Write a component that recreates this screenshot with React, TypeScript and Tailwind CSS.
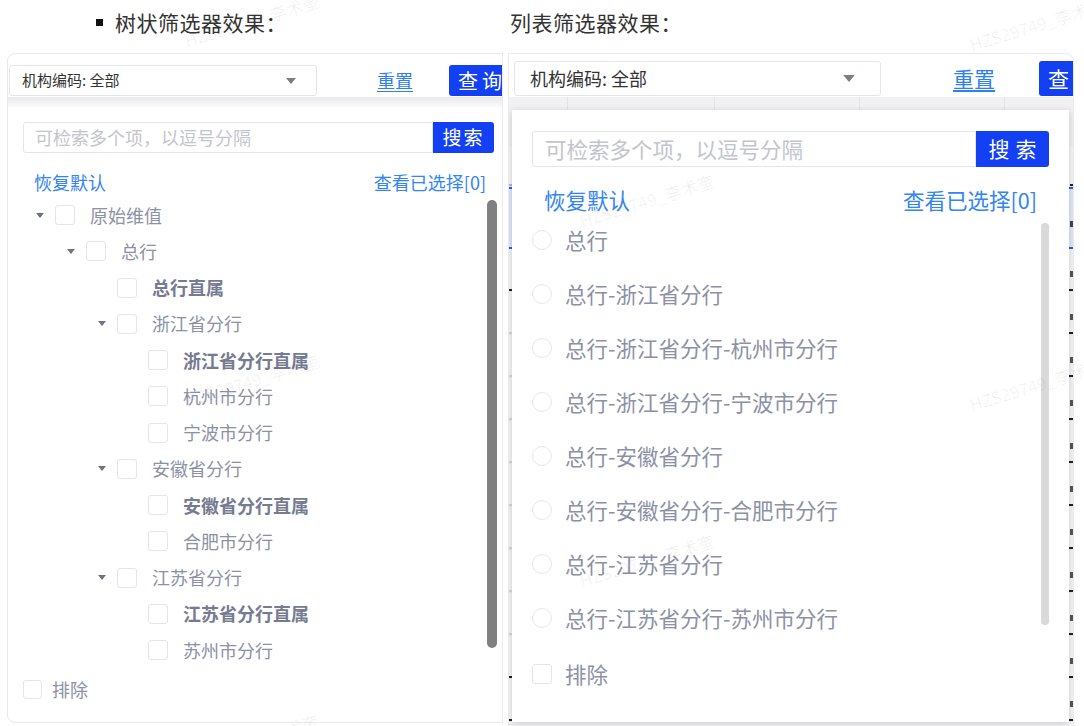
import React from "react";

type TreeNode = { label: string; level: number; caret?: boolean; bold?: boolean };

const treeNodes: TreeNode[] = [
  { label: "原始维值", level: 0, caret: true },
  { label: "总行", level: 1, caret: true },
  { label: "总行直属", level: 2, bold: true },
  { label: "浙江省分行", level: 2, caret: true },
  { label: "浙江省分行直属", level: 3, bold: true },
  { label: "杭州市分行", level: 3 },
  { label: "宁波市分行", level: 3 },
  { label: "安徽省分行", level: 2, caret: true },
  { label: "安徽省分行直属", level: 3, bold: true },
  { label: "合肥市分行", level: 3 },
  { label: "江苏省分行", level: 2, caret: true },
  { label: "江苏省分行直属", level: 3, bold: true },
  { label: "苏州市分行", level: 3 },
];

// indent per tree level (31px steps)
const indent = ["pl-[28px]", "pl-[59px]", "pl-[90px]", "pl-[121px]"];

const listItems = [
  "总行",
  "总行-浙江省分行",
  "总行-浙江省分行-杭州市分行",
  "总行-浙江省分行-宁波市分行",
  "总行-安徽省分行",
  "总行-安徽省分行-合肥市分行",
  "总行-江苏省分行",
  "总行-江苏省分行-苏州市分行",
];

// faint tiled watermark over the whole page
const watermarks = [
  "left-[185px] top-[28px]",
  "left-[580px] top-[208px]",
  "left-[970px] top-[392px]",
  "left-[970px] top-[32px]",
  "left-[185px] top-[388px]",
  "left-[580px] top-[568px]",
  "left-[-205px] top-[212px]",
  "left-[-205px] top-[572px]",
  "left-[185px] top-[748px]",
  "left-[580px] top-[-152px]",
];

function Caret({ className }: { className: string }) {
  return (
    <svg viewBox="0 0 10 6" className={className}>
      <path d="M0 0h10L5 6z" fill="currentColor" />
    </svg>
  );
}

function TreePanel() {
  return (
    <div className="flex h-[670px] w-[496px] shrink-0 flex-col overflow-hidden rounded-l-[8px] border border-[#e9e9ee] bg-white">
      {/* filter header */}
      <div className="flex items-start whitespace-nowrap pt-[11px] pb-[1px]">
        <div className="ml-[1px] flex h-[31px] w-[308px] shrink-0 items-center justify-between rounded-[3px] border border-[#e4e5ec] pl-[12px] pr-[20px] text-[15px] text-[#333]">
          <span>机构编码: 全部</span>
          <Caret className="h-[6px] w-[10px] text-[#7b7f8c]" />
        </div>
        <span className="ml-[60px] mt-[3px] shrink-0 text-[18px] leading-[24px] text-[#2f7ff2] underline underline-offset-[3px]">重置</span>
        <div className="ml-[36px] flex h-[31px] w-[60px] shrink-0 items-center rounded-l-[3px] bg-[#1240f2] pl-[9px] text-[20px] tracking-[4px] text-white">
          查询
        </div>
      </div>
      <div className="h-[10px] bg-linear-to-b from-[#e9e9ee] to-[#fbfbfc]" />

      {/* search */}
      <div className="ml-[15px] mt-[15px] flex whitespace-nowrap">
        <div className="flex h-[31px] w-[410px] shrink-0 items-center rounded-l-[3px] border border-[#e4e5ec] pl-[11px] text-[18px] text-[#c3c5cd]">
          可检索多个项，以逗号分隔
        </div>
        <div className="flex h-[31px] w-[61px] shrink-0 items-center justify-center rounded-r-[3px] bg-[#1240f2] text-[19px] tracking-[2px] text-white">
          搜索
        </div>
      </div>

      <div className="ml-[26px] mr-[16px] mt-[17px] flex h-[24px] items-center justify-between whitespace-nowrap text-[18px] text-[#3384f4]">
        <span>恢复默认</span>
        <span>查看已选择[0]</span>
      </div>

      {/* tree */}
      <div className="mt-[3px] flex">
        <div className="flex flex-1 flex-col">
          {treeNodes.map((node) => (
            <div key={node.label} className={`flex h-[36.25px] items-center whitespace-nowrap ${indent[node.level]}`}>
              <div className="flex w-[8px] shrink-0 justify-center">
                {node.caret && <Caret className="h-[5px] w-[8px] text-[#6e7286]" />}
              </div>
              <div className="ml-[11px] h-[20px] w-[20px] shrink-0 rounded-[3px] border border-[#e3e4ec] bg-white" />
              <span
                className={`ml-[15px] text-[18px] ${node.bold ? "font-bold text-[#767b92]" : "text-[#8c91a6]"}`}
              >
                {node.label}
              </span>
            </div>
          ))}
        </div>
        <div className="mr-[5px] mt-[3px] h-[448px] w-[10px] shrink-0 rounded-full bg-[#808080]" />
      </div>

      <div className="ml-[15px] mt-[9px] flex h-[24px] items-center">
        <div className="h-[19px] w-[19px] shrink-0 rounded-[3px] border border-[#e3e4ec]" />
        <span className="ml-[10px] text-[18px] text-[#8c91a6]">排除</span>
      </div>
    </div>
  );
}

function BackgroundTable() {
  const rows = Array.from({ length: 12 }, (_, i) => i);
  return (
    <div className="flex flex-col">
      <div className="flex h-[50px] bg-[#f1f1f4]">
        <div className="w-[59px] border-r border-[#e2e2e8]" />
        <div className="w-[147px] border-r border-[#e2e2e8]" />
        <div className="w-[145px] border-r border-[#e2e2e8]" />
        <div className="w-[145px] border-r border-[#e2e2e8]" />
        <div className="flex-1" />
      </div>
      <div className="flex h-[40px] items-end justify-between border-b border-[#eeeef2] bg-[#f6f6f8]">
        <span className="h-[2px] w-[3px] bg-[#bbb]" />
        <span className="h-[2px] w-[3px] bg-[#222]" />
      </div>
      <div className="flex h-[62px] items-end justify-between border-y-2 border-[#2d5fe0] bg-[#dfe8fa]">
        <span />
        <span className="mb-[20px] h-[6px] w-[3px] bg-[#444]" />
      </div>
      {rows.map((i) => (
        <div key={i} className="flex h-[43px] items-end justify-between border-b border-[#eeeef2] bg-[#f6f6f8]">
          <span className={`h-[2px] w-[3px] ${i === 0 || i > 8 ? "bg-[#222]" : "bg-[#d8d8dc]"}`} />
          <div className="flex flex-col items-end gap-[12px]">
            <span className="h-[6px] w-[3px] bg-[#555]" />
            <span className="h-[2px] w-[4px] bg-[#222]" />
          </div>
        </div>
      ))}
    </div>
  );
}

function ListPanel() {
  return (
    <div className="relative h-[680px] w-[566px] shrink-0 overflow-hidden rounded-tr-[8px] border border-[#e9e9ee] bg-white">
      {/* filter header */}
      <div className="flex items-start whitespace-nowrap pt-[7px] pb-[1px]">
        <div className="ml-[5px] flex h-[35px] w-[367px] shrink-0 items-center justify-between rounded-[3px] border border-[#e4e5ec] pl-[15px] pr-[25px] text-[18px] text-[#333]">
          <span>机构编码: 全部</span>
          <Caret className="h-[7px] w-[12px] text-[#7b7f8c]" />
        </div>
        <span className="ml-[72px] mt-[3px] shrink-0 text-[21px] leading-[28px] text-[#2f7ff2] underline underline-offset-[3px]">重置</span>
        <div className="ml-[44px] flex h-[35px] w-[70px] shrink-0 items-center rounded-l-[3px] bg-[#1240f2] pl-[9px] text-[21px] tracking-[5px] text-white">
          查询
        </div>
      </div>

      <BackgroundTable />

      {/* dropdown over the table */}
      <div className="absolute left-[3px] right-[4px] top-[56px] flex h-[612px] flex-col bg-white px-[20px] pt-[21px] shadow-[0_2px_8px_rgba(0,0,0,0.18)]">
        <div className="flex whitespace-nowrap">
          <div className="flex h-[36px] flex-1 items-center rounded-l-[3px] border border-[#e4e5ec] pl-[12px] text-[21.5px] text-[#c3c5cd]">
            可检索多个项，以逗号分隔
          </div>
          <div className="flex h-[36px] w-[73px] shrink-0 items-center justify-center rounded-r-[3px] bg-[#1240f2] text-[21px] tracking-[6px] text-white">
            <span className="pl-[6px]">搜索</span>
          </div>
        </div>

        <div className="mt-[20px] flex h-[26px] items-center justify-between whitespace-nowrap px-[12px] text-[21.5px] text-[#3384f4]">
          <span>恢复默认</span>
          <span>查看已选择[0]</span>
        </div>

        <div className="flex">
          <div className="flex flex-1 flex-col">
            {listItems.map((item) => (
              <div key={item} className="flex h-[54px] items-center whitespace-nowrap">
                <div className="h-[20px] w-[20px] shrink-0 rounded-full border border-[#e6e7ee]" />
                <span className="ml-[13px] text-[21.5px] text-[#8c91a6]">{item}</span>
              </div>
            ))}
          </div>
          <div className="mt-[10px] h-[402px] w-[8px] shrink-0 rounded-full bg-[#d9d9d9]" />
        </div>

        <div className="mt-[2px] flex h-[54px] items-center">
          <div className="h-[20px] w-[20px] shrink-0 rounded-[3px] border border-[#e4e5ec]" />
          <span className="ml-[13px] text-[21.5px] text-[#8c91a6]">排除</span>
        </div>
      </div>
    </div>
  );
}

export default function App() {
  return (
    <div className="relative h-[726px] w-[1084px] overflow-hidden bg-white font-['Noto_Sans_CJK_SC','Noto_Sans',sans-serif]">
      {/* captions */}
      <div className="flex h-[53px] items-start whitespace-nowrap pt-[9px] text-[21px] leading-[26px] tracking-[0.5px] text-[#333]">
        <div className="flex w-[510px] shrink-0 items-center pl-[96px]">
          <span className="h-[7px] w-[7px] bg-[#111]" />
          <span className="ml-[12px]">树状筛选器效果：</span>
        </div>
        <span>列表筛选器效果：</span>
      </div>

      <div className="flex gap-[5px] pl-[7px]">
        <TreePanel />
        <ListPanel />
      </div>

      {watermarks.map((pos) => (
        <span
          key={pos}
          className={`pointer-events-none absolute ${pos} origin-left -rotate-[17deg] whitespace-nowrap text-[17px] text-black/[0.06]`}
        >
          HZS29749_李术奎
        </span>
      ))}
    </div>
  );
}
